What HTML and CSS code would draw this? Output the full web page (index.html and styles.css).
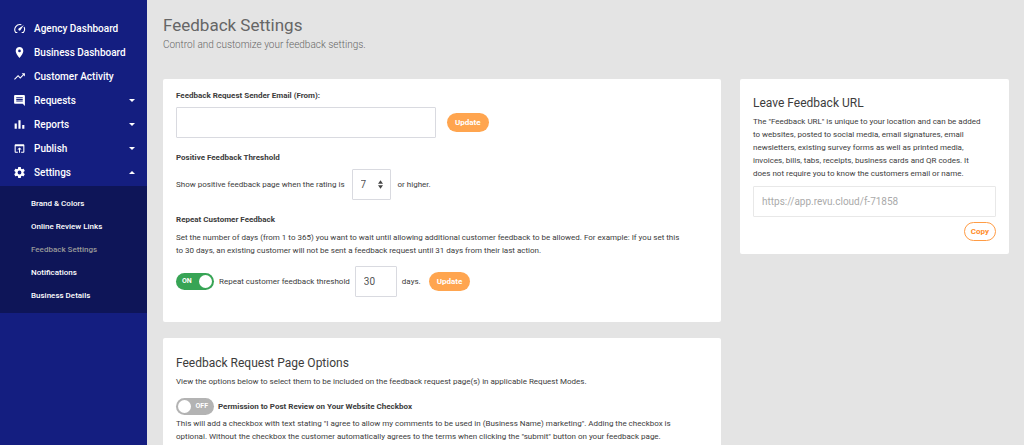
FILE: index.html
```html
<!DOCTYPE html>
<html lang="en">
<head>
    <meta charset="UTF-8">
    <meta name="viewport" content="width=device-width, initial-scale=1.0">
    <title>Feedback Settings</title>
    <link rel="stylesheet" href="styles.css">
</head>
<body>
    <div class="layout">
        <nav class="sidebar">
            <ul class="menu">
                <li><a href="#">
                    <svg class="icon" viewBox="0 0 24 24"><path d="M8 19.500H5A9.500 9.500 0 0 1 15.500 5M20.300 9A9.500 9.500 0 0 1 19 19.500H16" fill="none" stroke="currentColor" stroke-width="2"/><path d="M20 5.500 10.500 12.200a2.200 2.200 0 1 0 3.200 3.200z"/></svg>
                    <span>Agency Dashboard</span>
                </a></li>
                <li><a href="#">
                    <svg class="icon" viewBox="0 0 24 24"><path d="M12 2C8.130 2 5 5.130 5 9c0 5.250 7 13 7 13s7-7.750 7-13c0-3.870-3.130-7-7-7zm0 9.500a2.500 2.500 0 0 1 0-5 2.500 2.500 0 0 1 0 5z"/></svg>
                    <span>Business Dashboard</span>
                </a></li>
                <li><a href="#">
                    <svg class="icon" viewBox="0 0 24 24"><path d="M16 6l2.290 2.290-4.880 4.880-4-4L2 16.590 3.410 18l6-6 4 4 6.300-6.290L22 12V6z"/></svg>
                    <span>Customer Activity</span>
                </a></li>
                <li><a href="#">
                    <svg class="icon" viewBox="0 0 24 24"><path d="M21.990 4c0-1.100-.89-2-1.990-2H4c-1.100 0-2 .9-2 2v12c0 1.100.9 2 2 2h14l4 4-.01-18zM18 14H6v-2h12v2zm0-3H6V9h12v2zm0-3H6V6h12v2z"/></svg>
                    <span>Requests</span>
                    <i class="caret"></i>
                </a></li>
                <li><a href="#">
                    <svg class="icon" viewBox="0 0 24 24"><path d="M3 10h4v10H3zM10 4h4v16h-4zM17 13h4v7h-4z"/></svg>
                    <span>Reports</span>
                    <i class="caret"></i>
                </a></li>
                <li><a href="#">
                    <svg class="icon" viewBox="0 0 24 24"><path d="M19 4H5c-1.110 0-2 .9-2 2v12c0 1.100.89 2 2 2h4v-2H5V8h14v10h-4v2h4c1.100 0 2-.9 2-2V6c0-1.100-.89-2-2-2zm-7 6l-4 4h3v6h2v-6h3l-4-4z"/></svg>
                    <span>Publish</span>
                    <i class="caret"></i>
                </a></li>
                <li><a href="#">
                    <svg class="icon" viewBox="0 0 24 24"><path d="M19.430 12.980c.04-.32.07-.64.07-.98s-.03-.66-.07-.98l2.110-1.650c.19-.15.24-.42.12-.64l-2-3.460c-.12-.22-.39-.3-.61-.22l-2.490 1c-.52-.4-1.080-.73-1.690-.98l-.38-2.650C14.460 2.180 14.250 2 14 2h-4c-.25 0-.46.18-.49.42l-.38 2.650c-.61.25-1.170.59-1.690.98l-2.490-1c-.23-.09-.49 0-.61.22l-2 3.460c-.13.22-.07.49.12.64l2.110 1.650c-.04.32-.07.65-.07.98s.03.66.07.98l-2.110 1.650c-.19.15-.24.42-.12.64l2 3.460c.12.22.39.3.61.22l2.490-1c.52.4 1.080.73 1.690.98l.38 2.650c.03.24.24.42.49.42h4c.25 0 .46-.18.49-.42l.38-2.650c.61-.25 1.170-.59 1.690-.98l2.490 1c.23.09.49 0 .61-.22l2-3.460c.12-.22.07-.49-.12-.64l-2.110-1.650zM12 15.500a3.500 3.500 0 0 1 0-7 3.500 3.500 0 0 1 0 7z"/></svg>
                    <span>Settings</span>
                    <i class="caret up"></i>
                </a></li>
            </ul>
            <ul class="submenu">
                <li><a href="#">Brand &amp; Colors</a></li>
                <li><a href="#">Online Review Links</a></li>
                <li><a href="#" class="active">Feedback Settings</a></li>
                <li><a href="#">Notifications</a></li>
                <li><a href="#">Business Details</a></li>
            </ul>
        </nav>

        <main class="content">
            <h1>Feedback Settings</h1>
            <p class="subtitle">Control and customize your feedback settings.</p>

            <div class="columns">
                <div class="column">
                    <section class="card main-card">
                        <label class="title" for="email">Feedback Request Sender Email (From):</label>
                        <div class="row email-row">
                            <input type="email" id="email" class="field email">
                            <button type="button" class="btn">Update</button>
                        </div>

                        <h3 class="title">Positive Feedback Threshold</h3>
                        <div class="row rating-row">
                            <label for="rating">Show positive feedback page when the rating is</label>
                            <div class="select-wrap">
                                <select id="rating" class="field">
                                    <option>5</option>
                                    <option>6</option>
                                    <option selected>7</option>
                                    <option>8</option>
                                    <option>9</option>
                                </select>
                                <svg class="arrows" viewBox="0 0 6 10"><path d="M3 0l3 4H0zM3 10L0 6h6z"/></svg>
                            </div>
                            <span>or higher.</span>
                        </div>

                        <h3 class="title">Repeat Customer Feedback</h3>
                        <p>Set the number of days (from 1 to 365) you want to wait until allowing additional customer feedback to be allowed. For example: If you set this to 30 days, an existing customer will not be sent a feedback request until 31 days from their last action.</p>
                        <div class="row repeat-row">
                            <label class="switch">
                                <input type="checkbox" aria-label="Repeat customer feedback" checked>
                                <span>ON</span>
                            </label>
                            <label for="days">Repeat customer feedback threshold</label>
                            <input type="text" id="days" class="field days" value="30">
                            <span>days.</span>
                            <button type="button" class="btn">Update</button>
                        </div>
                    </section>

                    <section class="card">
                        <h2>Feedback Request Page Options</h2>
                        <p>View the options below to select them to be included on the feedback request page(s) in applicable Request Modes.</p>
                        <div class="row option-row">
                            <label class="switch">
                                <input type="checkbox" id="permission">
                                <span>OFF</span>
                            </label>
                            <label class="title" for="permission">Permission to Post Review on Your Website Checkbox</label>
                        </div>
                        <p>This will add a checkbox with text stating "I agree to allow my comments to be used in (Business Name) marketing". Adding the checkbox is optional. Without the checkbox the customer automatically agrees to the terms when clicking the "submit" button on your feedback page.</p>
                    </section>
                </div>

                <section class="card url-card">
                    <h2><label for="url">Leave Feedback URL</label></h2>
                    <p>The "Feedback URL" is unique to your location and can be added to websites, posted to social media, email signatures, email newsletters, existing survey forms as well as printed media, invoices, bills, tabs, receipts, business cards and QR codes. It does not require you to know the customers email or name.</p>
                    <input type="text" id="url" class="field url" placeholder="https://app.revu.cloud/f-71858">
                    <button type="button" class="btn outline">Copy</button>
                </section>
            </div>
        </main>
    </div>
</body>
</html>
```
FILE: styles.css
```css
* {
    box-sizing: border-box;
}

body {
    margin: 0;
    background-color: #e4e4e4;
    color: #3c3c3c;
    font-family: Roboto, Arial, sans-serif;
    font-size: 8px;
    line-height: 13px;
}

h1, h2, h3, p, ul {
    margin: 0;
    padding: 0;
}

.layout {
    display: flex;
    min-height: 100vh;
}

/* sidebar */
.sidebar {
    flex: 0 0 147px;
    padding-top: 16px;
    background-color: #141e80;
}

.sidebar ul {
    list-style: none;
}

.sidebar a {
    display: flex;
    align-items: center;
    color: #fff;
    text-decoration: none;
    font-weight: 500;
}

.menu a {
    height: 24px;
    padding: 0 12px 0 13px;
    font-size: 10px;
}

.icon {
    width: 13px;
    height: 13px;
    margin-right: 8px;
    fill: currentColor;
}

.caret {
    margin-left: auto;
    border: 3px solid transparent;
    border-top-color: #fff;
    border-bottom: 0;
}

.caret.up {
    border-top: 0;
    border-bottom: 3px solid #fff;
}

.sidebar .submenu {
    margin-top: 2px;
    padding: 6px 0;
    background-color: #0e1558;
}

.submenu a {
    height: 23px;
    padding-left: 31px;
}

.submenu a.active {
    color: #999;
}

/* content */
.content {
    flex: 1;
    min-width: 0;
    padding: 14px 15px 16px 16px;
}

h1 {
    color: #666;
    font-size: 17px;
    font-weight: 400;
    line-height: 22px;
}

.subtitle {
    margin-bottom: 26px;
    color: #666;
    font-size: 10px;
    font-weight: 300;
    line-height: 17px;
}

.columns {
    display: grid;
    grid-template-columns: 1fr 269px;
    gap: 19px;
    align-items: start;
}

.card {
    margin-bottom: 16px;
    padding: 16px 13px;
    background-color: #fff;
    border-radius: 2px;
}

.main-card {
    padding: 10px 13px 25px;
}

.column p {
    padding-right: 26px;
}

h2 {
    margin-bottom: 3px;
    font-size: 12px;
    font-weight: 400;
    line-height: 18px;
}

.title {
    display: block;
    font-size: 8px;
    font-weight: 700;
    line-height: 13px;
}

.row {
    display: flex;
    align-items: center;
    gap: 4px;
}

.email-row {
    gap: 11px;
    margin: 5px 0 13px;
}

.rating-row {
    gap: 7px;
    margin: 5px 0 13px;
}

h3 + p {
    margin-top: 5px;
}

.repeat-row {
    gap: 5px;
    margin-top: 9px;
}

.repeat-row .btn {
    margin-left: 3px;
}

.option-row {
    margin: 10px 0 2px;
}

.field {
    height: 31px;
    padding: 0 8px;
    border: 1px solid #d9dae0;
    border-radius: 1px;
    background-color: #fff;
    color: #555;
    font-family: inherit;
    font-size: 10px;
}

.email {
    width: 260px;
}

.days {
    width: 42px;
}

.select-wrap {
    position: relative;
}

select.field {
    display: block;
    width: 39px;
    appearance: none;
}

.arrows {
    position: absolute;
    top: 11px;
    right: 8px;
    width: 5px;
    height: 9px;
    fill: #444;
    pointer-events: none;
}

.btn {
    height: 19px;
    padding: 0 8px;
    border: 0;
    border-radius: 10px;
    background-color: #ffa54f;
    color: #fff;
    font-family: inherit;
    font-size: 8px;
    font-weight: 700;
    cursor: pointer;
}

.btn.outline {
    padding: 0 6px;
    border: 1px solid #ff9c45;
    background-color: #fff;
    color: #ff8c28;
}

.switch {
    position: relative;
}

.switch input {
    display: block;
    width: 38px;
    height: 17px;
    margin: 0;
    padding: 2px;
    border-radius: 9px;
    background-color: #b3b3b3;
    appearance: none;
}

.switch input::before {
    content: "";
    display: block;
    width: 13px;
    height: 13px;
    border-radius: 50%;
    background-color: #fff;
}

.switch input:checked {
    background-color: #37a455;
}

.switch input:checked::before {
    margin-left: auto;
}

.switch span {
    position: absolute;
    top: 2px;
    right: 6px;
    color: #fff;
    font-size: 7px;
    font-weight: 700;
}

.switch input:checked + span {
    right: auto;
    left: 6px;
}

.url-card {
    display: flex;
    flex-direction: column;
    padding: 15px 13px 13px;
}

.url-card p {
    padding-right: 12px;
}

.url {
    margin: 6px 0 5px;
    border-color: #e8e8e8;
}

.url::placeholder {
    color: #aaa;
}

.url-card .btn {
    align-self: flex-end;
}
```
